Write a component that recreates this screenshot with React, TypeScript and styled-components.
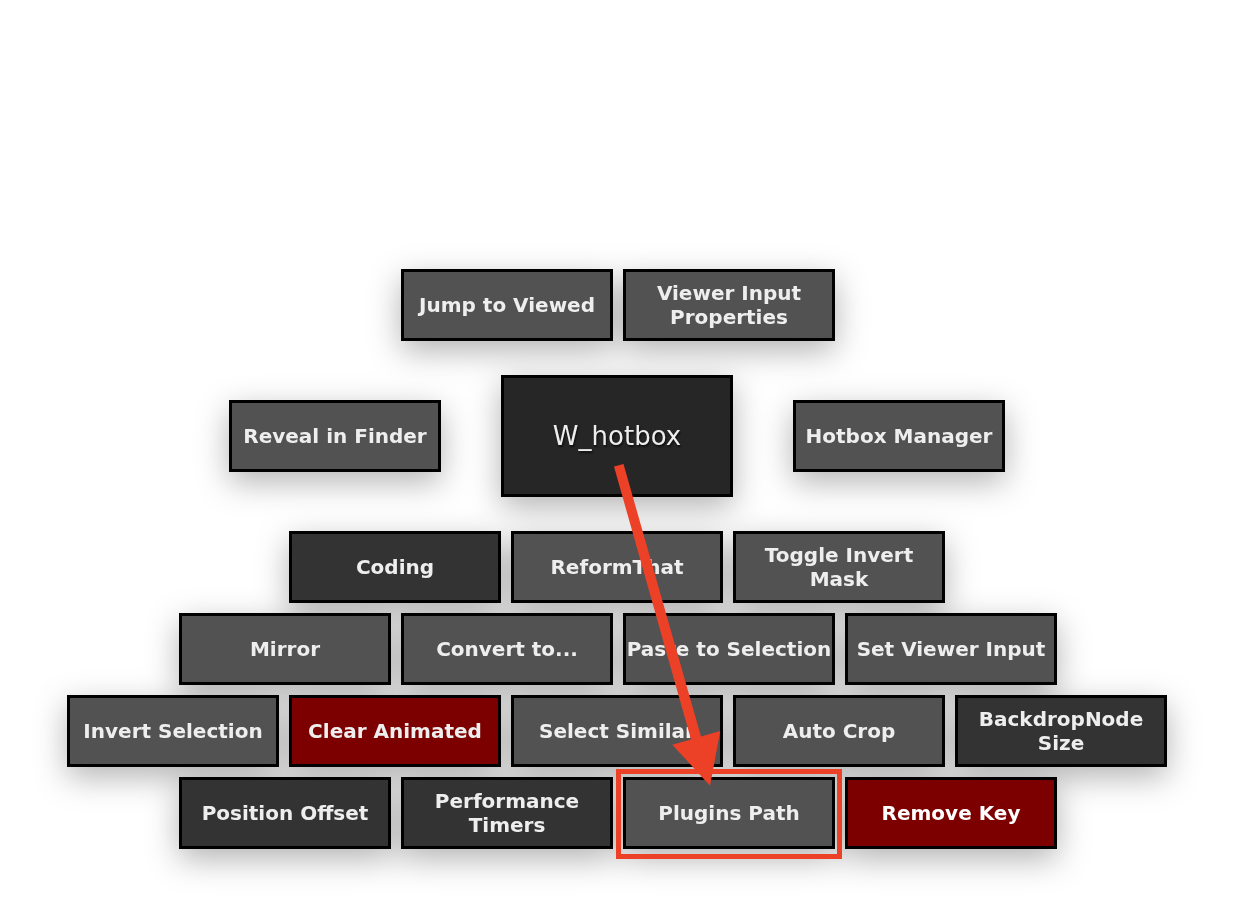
import React from "react";
import styled, { createGlobalStyle } from "styled-components";

const GlobalStyle = createGlobalStyle`
  body {
    margin: 0;
    background: #ffffff;
    font-family: Verdana, "DejaVu Sans", sans-serif;
  }
`;

type Tone = "normal" | "dark" | "danger";

const tones: Record<Tone, string> = {
  normal: "#525252",
  dark: "#333333",
  danger: "#7d0000",
};

const Page = styled.main`
  box-sizing: border-box;
  min-height: 100vh;
  padding: 269px 0 75px;
`;

const Board = styled.div`
  position: relative;
`;

const Hotbox = styled.div`
  display: flex;
  flex-direction: column;
  gap: 34px;
  filter: drop-shadow(0 10px 16px rgba(0, 0, 0, 0.3));
`;

const RowGroup = styled.div`
  display: flex;
  flex-direction: column;
  gap: 10px;
`;

const Row = styled.div<{ $gap?: number; $even?: boolean }>`
  display: flex;
  justify-content: center;
  align-items: center;
  gap: ${({ $gap }) => $gap ?? 10}px;
  padding-left: ${({ $even }) => ($even ? 2 : 0)}px;
`;

const Cell = styled.button<{ $tone: Tone; $bright?: boolean }>`
  flex: none;
  box-sizing: border-box;
  width: 212px;
  height: 72px;
  padding: 0;
  border: 3px solid #000000;
  background: ${({ $tone }) => tones[$tone]};
  color: ${({ $bright }) => ($bright ? "#ffffff" : "#eeeeee")};
  font-family: inherit;
  font-size: 20px;
  font-weight: 700;
  line-height: 24px;
  white-space: pre;
`;

const Hub = styled(Cell)`
  width: 232px;
  height: 122px;
  background: #262626;
  font-size: 26px;
  font-weight: 400;
  line-height: 32px;
  text-shadow: 1px 2px 2px rgba(0, 0, 0, 0.6);
`;

const Highlight = styled.div`
  position: absolute;
  top: 500px;
  left: calc(50% - 1px);
  box-sizing: border-box;
  width: 226px;
  height: 90px;
  border: 5px solid #ec4027;
  pointer-events: none;
`;

const Arrow = styled.svg`
  position: absolute;
  top: 193px;
  left: calc(50% - 5px);
  width: 112px;
  height: 326px;
  pointer-events: none;
`;

interface Item {
  label: string;
  tone?: Tone;
  bright?: boolean;
}

const topRow: Item[] = [
  { label: "Jump to Viewed" },
  { label: "Viewer Input\nProperties" },
];

const lowerRows: Item[][] = [
  [
    { label: "Coding", tone: "dark" },
    { label: "ReformThat" },
    { label: "Toggle Invert\nMask" },
  ],
  [
    { label: "Mirror" },
    { label: "Convert to..." },
    { label: "Paste to Selection" },
    { label: "Set Viewer Input" },
  ],
  [
    { label: "Invert Selection" },
    { label: "Clear Animated", tone: "danger" },
    { label: "Select Similar" },
    { label: "Auto Crop" },
    { label: "BackdropNode\nSize", tone: "dark" },
  ],
  [
    { label: "Position Offset", tone: "dark" },
    { label: "Performance\nTimers", tone: "dark" },
    { label: "Plugins Path" },
    { label: "Remove Key", tone: "danger", bright: true },
  ],
];

function HotboxButton({ label, tone = "normal", bright }: Item) {
  return (
    <Cell type="button" $tone={tone} $bright={bright}>
      {label}
    </Cell>
  );
}

function ButtonRow({ items }: { items: Item[] }) {
  return (
    <Row $even={items.length % 2 === 0}>
      {items.map((item) => (
        <HotboxButton key={item.label} {...item} />
      ))}
    </Row>
  );
}

export default function App() {
  return (
    <Page>
      <GlobalStyle />
      <Board>
        <Hotbox>
          <ButtonRow items={topRow} />
          <Row $gap={60}>
            <HotboxButton label="Reveal in Finder" />
            <Hub type="button" $tone="dark">
              W_hotbox
            </Hub>
            <HotboxButton label="Hotbox Manager" />
          </Row>
          <RowGroup>
            {lowerRows.map((items) => (
              <ButtonRow key={items[0].label} items={items} />
            ))}
          </RowGroup>
        </Hotbox>
        <Highlight />
        <Arrow viewBox="0 0 112 326" aria-hidden="true">
          <path
            d="M2 4.5 L11.5 2 L89 274.5 L108.3 269 L98 323.7 L60.3 282.7 L79 277.5 Z"
            fill="#ec4027"
          />
        </Arrow>
      </Board>
    </Page>
  );
}
